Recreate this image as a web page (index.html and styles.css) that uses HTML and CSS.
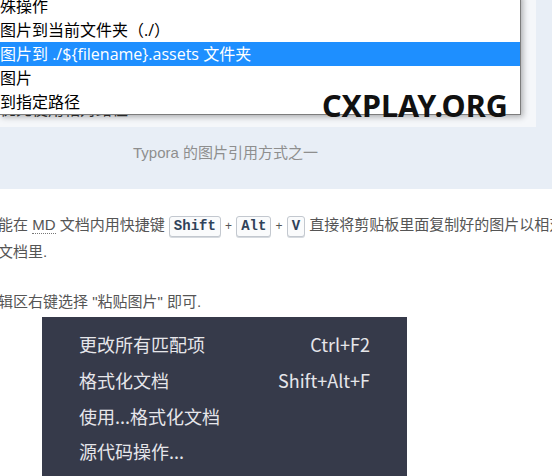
FILE: index.html
```html
<!DOCTYPE html>
<html lang="zh-CN">
<head>
<meta charset="utf-8">
<title>Typora</title>
<link rel="stylesheet" href="styles.css">
</head>
<body>
<div class="page">
  <section class="top">
    <div class="figure">
      <div class="under">优先使用相对路径</div>
      <div class="ctx">
        <div class="ctx-item">殊操作</div>
        <div class="ctx-item">图片到当前文件夹（./）</div>
        <div class="ctx-item active">图片到 ./${filename}.assets 文件夹</div>
        <div class="ctx-item">图片</div>
        <div class="ctx-item">到指定路径</div>
        <div class="mark">CXPLAY.ORG</div>
      </div>
    </div>
    <div class="caption">Typora 的图片引用方式之一</div>
  </section>
  <section class="content">
    <p class="para">能在 <abbr class="abbr">MD</abbr> 文档内用快捷键 <kbd class="key">Shift</kbd> <span class="plus">+</span> <kbd class="key">Alt</kbd> <span class="plus">+</span> <kbd class="key">V</kbd> 直接将剪贴板里面复制好的图片以相对路径的方式插入到<br>文档里.</p>
    <p class="para">辑区右键选择 "粘贴图片" 即可.</p>
    <div class="dmenu">
      <div class="drow"><span>更改所有匹配项</span><span class="sc">Ctrl+F2</span></div>
      <div class="drow"><span>格式化文档</span><span class="sc">Shift+Alt+F</span></div>
      <div class="drow"><span>使用...格式化文档</span></div>
      <div class="drow"><span>源代码操作...</span></div>
      <div class="dsep"></div>
    </div>
  </section>
</div>
</body>
</html>
```

FILE: styles.css
```css
html, body {
  margin: 0;
  padding: 0;
  background: #ffffff;
}
.page {
  width: 552px;
  height: 476px;
  overflow: hidden;
  font-family: "Liberation Sans", "Noto Sans CJK SC", sans-serif;
}
.top {
  background: #e8eef6;
  height: 189px;
}
.figure {
  position: relative;
  width: 536px;
  height: 127px;
  background: #f5f7fa;
  overflow: hidden;
}
.under {
  padding-top: 100px;
  line-height: 20px;
  font-size: 16px;
  color: #333;
  white-space: nowrap;
}
.ctx {
  position: absolute;
  top: -6px;
  left: 0;
  width: 520px;
  height: 120px;
  background: #ffffff;
  border-right: 1px solid #7d7d7d;
  border-bottom: 1px solid #7d7d7d;
  box-shadow: 2px 2px 6px rgba(0, 0, 0, 0.3);
}
.ctx-item {
  height: 24px;
  line-height: 24px;
  font-family: "Open Sans", "Noto Sans CJK SC", sans-serif;
  font-size: 16px;
  color: #000;
  white-space: nowrap;
}
.ctx-item.active {
  background: #1e8fff;
  color: #fff;
}
.mark {
  position: absolute;
  left: 322px;
  top: 96px;
  font-family: "Noto Sans", "Open Sans", sans-serif;
  font-weight: 700;
  font-size: 30.5px;
  line-height: 30px;
  color: #111;
  white-space: nowrap;
}
.caption {
  padding-top: 16px;
  padding-left: 133px;
  line-height: 20px;
  font-size: 15px;
  color: #8e8e8e;
  white-space: nowrap;
}
.content {
  padding-top: 23px;
}
.para {
  margin: 0 0 25px -2px;
  font-size: 15px;
  line-height: 25px;
  color: #555;
  white-space: nowrap;
}
.abbr {
  text-decoration: none;
  border-bottom: 1px dotted #777;
}
.key {
  display: inline-block;
  font-family: "Liberation Mono", monospace;
  font-weight: 700;
  font-size: 14px;
  line-height: 19px;
  padding: 0 4px;
  border: 1px solid #c3c8cf;
  border-radius: 3px;
  background: #fafbfc;
  box-shadow: 0 1px 0 #d6dadf;
  color: #2f4259;
  vertical-align: middle;
}
.plus {
  font-size: 12px;
  color: #555;
}
.dmenu {
  margin: -22px 0 0 42px;
  width: 365px;
  padding-top: 9.5px;
  background: #363a4a;
}
.drow {
  display: flex;
  justify-content: space-between;
  align-items: center;
  height: 35.7px;
  padding: 0 37px;
  font-family: "Noto Sans CJK SC", sans-serif;
  font-size: 18px;
  color: #e6e6ea;
  white-space: nowrap;
}
.dsep {
  height: 1px;
  margin: 7px 14px 0;
  background: #63666f;
}
```
